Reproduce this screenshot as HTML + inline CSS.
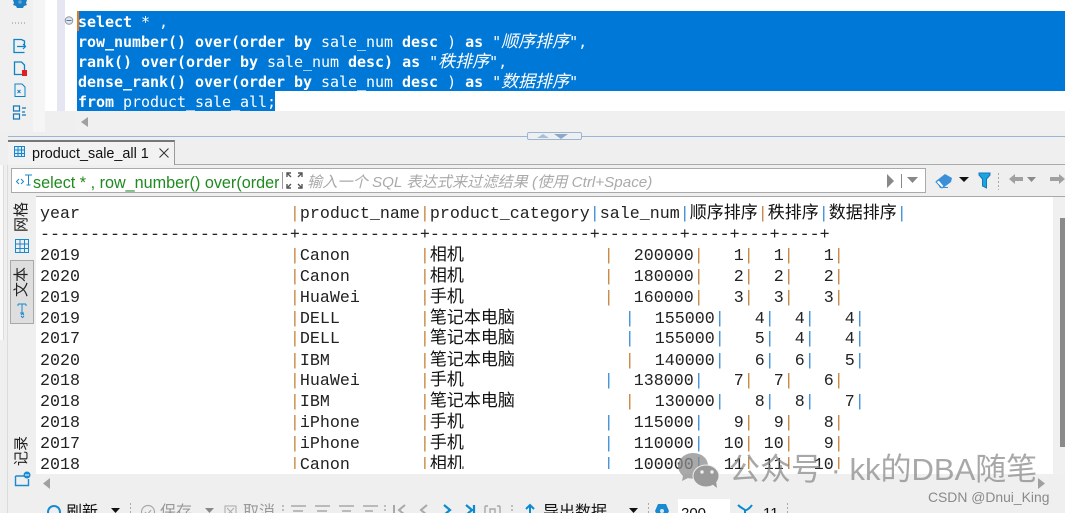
<!DOCTYPE html>
<html><head><meta charset="utf-8">
<style>
html,body{margin:0;padding:0;width:1065px;height:513px;overflow:hidden}
body{background:#efefef;font-family:"Liberation Sans","Noto Sans CJK SC",sans-serif}
#w{position:absolute;left:0;top:0;width:1065px;height:513px;overflow:hidden;background:#efefef}
.a{position:absolute}
.ed{position:absolute;left:78px;height:20px;font:15px/20px "DejaVu Sans Mono",monospace;letter-spacing:-.03px;color:#fff;white-space:pre}
.ed b{font-weight:bold}
.ed i{font-style:italic}
.ed i span{font:italic 17px/0 "Noto Sans CJK SC",sans-serif;letter-spacing:0}
#res{position:absolute;left:36px;top:197px;width:1017px;height:277px;background:#fff;overflow:hidden}
#clip{position:absolute;left:0;top:0;width:1017px;height:272px;overflow:hidden}
.r{position:absolute;left:4px;height:21px;margin-top:1px;font:16.67px/21px "Liberation Mono",monospace;color:#222;white-space:pre}
.r u{text-decoration:none;color:#c8853c}
.r s{text-decoration:none;color:#3d8fd6}
.r em{font:17px/0 "Noto Sans CJK SC",sans-serif;color:#111}
.v{position:absolute;font-size:15px;color:#222;transform:rotate(-90deg);transform-origin:center;white-space:nowrap;line-height:18px;width:36px;height:18px;text-align:center}
.tb{position:absolute;top:504px;font-size:16px;line-height:18px;white-space:nowrap;color:#111}
.gy{color:#999}
</style></head><body>
<div id="w">

<!-- editor -->
<div class="a" style="left:0;top:0;width:33px;height:132px;background:#f0f0f0"></div>
<div class="a" style="left:33px;top:0;width:12px;height:132px;background:#f5f5f5"></div>
<div class="a" style="left:45px;top:0;width:1020px;height:111px;background:#fff"></div>
<div class="a" style="left:57px;top:0;width:8px;height:111px;background:#e6e6f2"></div>
<div class="a" style="left:75px;top:111px;width:990px;height:21px;background:#f0f0f0"></div>
<div class="a" style="left:77px;top:11px;width:988px;height:80px;background:#0078d7"></div>
<div class="a" style="left:77px;top:91px;width:198px;height:20px;background:#0078d7"></div>
<div class="a" style="left:77px;top:11px;width:2px;height:20px;background:#e8781e"></div>
<div class="ed" style="top:12px"><b>select</b> * ,</div>
<div class="ed" style="top:32px"><b>row_number() over(order by</b> sale_num <b>desc</b> ) <b>as</b> <i>"<span>顺序排序</span>"</i>,</div>
<div class="ed" style="top:52px"><b>rank() over(order by</b> sale_num <b>desc)</b> <b>as</b> <i>"<span>秩排序</span>"</i>,</div>
<div class="ed" style="top:72px"><b>dense_rank() over(order by</b> sale_num <b>desc</b> ) <b>as</b> <i>"<span>数据排序</span>"</i></div>
<div class="ed" style="top:92px"><b>from</b> product_sale_all;</div>

<!-- left toolbar icons -->
<svg class="a" style="left:0;top:0" width="80" height="125" fill="none">
<path d="M13 0h14l-1 3 1 2-3 1-1 2h-6l-1-2-3-1 1-2z" fill="#1c7fc4"/><circle cx="20" cy="2" r="1.800" fill="#5aa6dc"/>
<path d="M12 23h1M15 23h1M18 23h1M21 23h1M24 23h1" stroke="#888"/>
<path d="M24.500 47V41l-3-1.500h-7.500v13h10.500" stroke="#0a84c8" stroke-width="1.300"/><path d="M17 46.500h8M23 44l2.500 2.500L23 49" stroke="#0a84c8" stroke-width="1.200"/>
<path d="M14.500 62h7l3 3v9.500h-10z" stroke="#0a84c8" stroke-width="1.300"/><rect x="22" y="70" width="5" height="6" fill="#e02020"/>
<path d="M15 84h7l3 3v9.500H15z" stroke="#0a84c8"/><path d="M17.500 90l3 3M20.500 90l-3 3" stroke="#0a84c8"/>
<path d="M13.500 106h6v5h-6zM13.500 114h6v5h-6zM22 108h4M22 115h4M22 112h3" stroke="#1477b8" stroke-width="1.200"/>
<circle cx="69" cy="20.500" r="3.800" fill="#dfe3ea" stroke="#8a97a8"/><path d="M66.500 20.500h5" stroke="#68768a"/>
</svg>
<svg class="a" style="left:80px;top:114px" width="12" height="16"><path d="M8 3v10L1 8z" fill="#a0a0a0"/></svg>

<!-- splitter -->
<div class="a" style="left:8px;top:136px;width:1057px;height:1px;background:#9ab6d6"></div>
<div class="a" style="left:527px;top:132px;width:53px;height:6px;background:#efefef;border:1px solid #9ab6d6;border-radius:2px"></div>
<svg class="a" style="left:535px;top:133px" width="40" height="6"><path d="M2 5l6-4 6 4z" fill="#a9bfd8"/><path d="M19 1h14l-7 5z" fill="#8ea7c6"/></svg>

<!-- tab -->
<div class="a" style="left:175px;top:164px;width:890px;height:1px;background:#aaa"></div>
<div class="a" style="left:8px;top:140px;width:167px;height:25px;background:#f2f2f2;border-top:2px solid #777;border-right:1px solid #999;box-sizing:border-box"></div>
<svg class="a" style="left:14px;top:146px" width="12" height="12" fill="none" stroke="#1a86c8"><rect x=".5" y=".5" width="10" height="10" fill="#d8ecf8"/><path d="M.5 4h10M.5 7.500h10M4 .5v10M7.500 .5v10"/></svg>
<div class="a" style="left:32px;top:145px;font-size:14.400px;line-height:18px;color:#111;white-space:nowrap">product_sale_all 1</div>
<svg class="a" style="left:158px;top:147px" width="12" height="12" stroke="#333" stroke-width="1"><path d="M1.500 1.500l9 9M10.500 1.500l-9 9"/></svg>

<!-- filter bar -->
<div class="a" style="left:11px;top:168px;width:915px;height:25px;background:#fff;border:1px solid #aaa;box-sizing:border-box"></div>
<svg class="a" style="left:15px;top:172px" width="18" height="16" fill="none" stroke="#1a86c8"><path d="M4 7L1.500 9.500 4 12M6 7l2.500 2.500L6 12" stroke-width="1"/><path d="M10 3h7M13.500 3v10M11.500 13h4" stroke-width="1"/></svg>
<div class="a" style="left:33px;top:174px;width:246px;overflow:hidden;font-size:16.200px;line-height:18px;color:#1f8a1f;white-space:nowrap">select * , row_number() over(order by sale_num desc</div>
<div class="a" style="left:282px;top:172px;width:1px;height:17px;background:#999"></div>
<svg class="a" style="left:286px;top:172px" width="17" height="17" fill="none" stroke="#555" stroke-width="1.400"><path d="M1 5V1h4M1 1l4 4M16 5V1h-4M16 1l-4 4M1 12v4h4M1 16l4-4M16 12v4h-4M16 16l-4-4"/></svg>
<div class="a" style="left:307px;top:174px;font-size:15.200px;line-height:18px;font-style:italic;color:#aaa;white-space:nowrap">输入一个 SQL 表达式来过滤结果 (使用 Ctrl+Space)</div>
<svg class="a" style="left:880px;top:172px" width="46" height="18"><path d="M7 2v14l7-7z" fill="#888"/><path d="M21.500 2v14" stroke="#888"/><path d="M27 5h11l-5.500 6z" fill="#888"/></svg>
<svg class="a" style="left:934px;top:170px" width="131" height="20">
<path d="M2 11l9-7 7 4-1 4-8 6H6z" fill="#3b8fd8"/><path d="M2 12l6 6 2-2-5-6z" fill="#fff" stroke="#3b8fd8"/><path d="M9 17.500h5" stroke="#3b8fd8"/>
<path d="M25 7h10l-5 5z" fill="#111"/>
<path d="M45 3h11v2l-3.500 4v9l-4-2V9L45 5z" fill="#19a6e0" stroke="#1477b8"/>
<path d="M64.500 3v18" stroke="#aaa" stroke-dasharray="2 2"/>
<path d="M75 9l6-5v3h8v4h-8v3z" fill="#a0a0a0"/><path d="M93 7h9l-4.500 5z" fill="#8a8a8a"/><path d="M131 9l-6-5v3h-9v4h9v3z" fill="#a0a0a0"/>
</svg>

<div class="a" style="left:36px;top:196px;width:1029px;height:1px;background:#a8a8a8"></div>

<!-- left side tabs -->
<div class="a" style="left:0;top:165px;width:3px;height:175px;background:#fafafa;border-right:1px solid #ddd"></div>
<div class="a" style="left:7px;top:165px;width:1px;height:348px;background:#dcdcdc"></div>
<div class="v" style="left:4px;top:208px">网格</div>
<svg class="a" style="left:15px;top:239px" width="14" height="14" fill="none" stroke="#1a8ad0"><rect x=".5" y=".5" width="13" height="13"/><path d="M.5 5h13M.5 9.500h13M5 .5v13M9.500 .5v13"/></svg>
<div class="a" style="left:10px;top:260px;width:24px;height:64px;background:#dedede;border:1px solid #a8a8a8;box-sizing:border-box"></div>
<div class="v" style="left:4px;top:273px">文本</div>
<svg class="a" style="left:15px;top:303px" width="14" height="16" fill="none" stroke="#1a8ad0"><path d="M3 1h8M7 1v9M5 10h4M3 1v2M11 1v2" stroke-width="1"/><path d="M6 12l1.500-1.500L9 12M6 13l1.500 1.500L9 13" stroke-width="1"/></svg>
<div class="v" style="left:4px;top:442px">记录</div>
<svg class="a" style="left:14px;top:471px" width="18" height="16" fill="none"><path d="M1.500 5h11M1.500 5v9.500h13V8" stroke="#1a8ad0" stroke-width="1.400"/><circle cx="13" cy="4" r="3.500" fill="#1a8ad0"/><path d="M11 4h4" stroke="#fff"/></svg>

<!-- result -->
<div id="res"><div id="clip">
<div class="r" style="top:6px">year                     <u>|</u>product_name<u>|</u>product_category<s>|</s>sale_num<s>|</s><em>顺序排序</em><u>|</u><em>秩排序</em><s>|</s><em>数据排序</em><s>|</s></div>
<div class="r" style="top:27px">-------------------------+------------+----------------+--------+----+---+----+</div>
<div class="r" style="top:48px">2019                     <u>|</u>Canon       <u>|</u><em>相机</em>              <u>|</u>  200000<u>|</u>   1<u>|</u>  1<u>|</u>   1<u>|</u></div>
<div class="r" style="top:69px">2020                     <u>|</u>Canon       <u>|</u><em>相机</em>              <u>|</u>  180000<u>|</u>   2<u>|</u>  2<u>|</u>   2<u>|</u></div>
<div class="r" style="top:90px">2019                     <u>|</u>HuaWei      <u>|</u><em>手机</em>              <u>|</u>  160000<u>|</u>   3<u>|</u>  3<u>|</u>   3<u>|</u></div>
<div class="r" style="top:111px">2019                     <u>|</u>DELL        <u>|</u><em>笔记本电脑</em>           <s>|</s>  155000<s>|</s>   4<s>|</s>  4<s>|</s>   4<s>|</s></div>
<div class="r" style="top:131px">2017                     <u>|</u>DELL        <u>|</u><em>笔记本电脑</em>           <s>|</s>  155000<s>|</s>   5<s>|</s>  4<s>|</s>   4<s>|</s></div>
<div class="r" style="top:153px">2020                     <u>|</u>IBM         <u>|</u><em>笔记本电脑</em>           <u>|</u>  140000<s>|</s>   6<s>|</s>  6<s>|</s>   5<s>|</s></div>
<div class="r" style="top:173px">2018                     <u>|</u>HuaWei      <u>|</u><em>手机</em>              <s>|</s>  138000<s>|</s>   7<u>|</u>  7<u>|</u>   6<u>|</u></div>
<div class="r" style="top:194px">2018                     <u>|</u>IBM         <u>|</u><em>笔记本电脑</em>           <u>|</u>  130000<s>|</s>   8<s>|</s>  8<s>|</s>   7<s>|</s></div>
<div class="r" style="top:215px">2018                     <u>|</u>iPhone      <u>|</u><em>手机</em>              <s>|</s>  115000<s>|</s>   9<u>|</u>  9<u>|</u>   8<u>|</u></div>
<div class="r" style="top:236px">2017                     <u>|</u>iPhone      <u>|</u><em>手机</em>              <s>|</s>  110000<s>|</s>  10<u>|</u> 10<u>|</u>   9<u>|</u></div>
<div class="r" style="top:257px">2018                     <u>|</u>Canon       <u>|</u><em>相机</em>              <s>|</s>  100000<s>|</s>  11<u>|</u> 11<u>|</u>  10<u>|</u></div>
</div></div>

<!-- scrollbars -->
<div class="a" style="left:1053px;top:197px;width:12px;height:277px;background:#f0f0f0"></div>
<div class="a" style="left:1060px;top:218px;width:5px;height:229px;background:#8a8a8a"></div>
<svg class="a" style="left:41px;top:475px" width="12" height="16"><path d="M9 3v11L2 8.500z" fill="#a0a0a0"/></svg>
<svg class="a" style="left:1036px;top:475px" width="12" height="16"><path d="M2 3v11l7-5.500z" fill="#a0a0a0"/></svg>

<!-- bottom toolbar -->
<svg class="a" style="left:46px;top:503px" width="16" height="10" fill="none" stroke="#1a8ad0" stroke-width="2"><circle cx="8" cy="9" r="6"/></svg>
<div class="tb" style="left:66px">刷新</div>
<svg class="a" style="left:110px;top:507px" width="12" height="6"><path d="M1 1h9l-4.500 5z" fill="#111"/></svg>
<svg class="a" style="left:129px;top:503px" width="3" height="10"><path d="M1.500 0v10" stroke="#aaa" stroke-dasharray="2 2"/></svg>
<svg class="a" style="left:140px;top:504px" width="16" height="9" fill="none" stroke="#aaa" stroke-width="1.200"><circle cx="8" cy="8" r="6.500"/><path d="M5 8l2.500 2.500L11 6"/></svg>
<div class="tb gy" style="left:160px">保存</div>
<svg class="a" style="left:204px;top:507px" width="12" height="6"><path d="M1 1h9l-4.500 5z" fill="#888"/></svg>
<svg class="a" style="left:224px;top:505px" width="13" height="8" fill="none" stroke="#aaa"><rect x="1" y="1" width="11" height="11"/><path d="M3 3l7 7M10 3l-7 7"/></svg>
<div class="tb gy" style="left:243px">取消</div>
<svg class="a" style="left:282px;top:503px" width="300" height="10" fill="none" stroke="#a8a8a8" stroke-width="1.400">
<path d="M1 2v10" stroke-dasharray="2 2"/>
<path d="M9 3h15M11 8h10M33 3h15M35 8h10M57 3h15M60 8h9M81 3h15M83 8h8"/>
<path d="M103 2v10" stroke-dasharray="2 2"/>
<path d="M112 2v10M123 2l-6 5 6 5M145 2l-6 5 6 5" stroke-width="2"/>
<path d="M162 2l6 5-6 5M184 2l6 5-6 5M192 2v10" stroke="#0a8ad0" stroke-width="2.200"/>
<path d="M203 3h3M215 3h3M203 3v8M218 3v8M208 6h5v6h-5z"/>
<path d="M230 2v10" stroke-dasharray="2 2"/>
<path d="M248 12V3M244 6l4-4 4 4" stroke="#0a8ad0" stroke-width="2"/>
</svg>
<div class="tb" style="left:543px">导出数据</div>
<svg class="a" style="left:628px;top:507px" width="12" height="6"><path d="M1 1h9l-4.500 5z" fill="#111"/></svg>
<svg class="a" style="left:647px;top:503px" width="3" height="10"><path d="M1.500 0v10" stroke="#aaa" stroke-dasharray="2 2"/></svg>
<svg class="a" style="left:654px;top:504px" width="16" height="9"><path d="M4 0h8l3 7-3 6H4L1 7z" fill="#1a8ad0"/><circle cx="8" cy="7" r="2" fill="#cfe8f8"/></svg>
<div class="a" style="left:678px;top:499px;width:52px;height:14px;background:#fff"></div>
<div class="tb" style="left:681px;font-size:15px;top:505px;color:#111">200</div>
<svg class="a" style="left:737px;top:503px" width="18" height="10" fill="none" stroke="#0a8ad0" stroke-width="2"><path d="M1 2c3 3 6 4 7 5s5-2 7-5M8 7v5"/></svg>
<div class="tb" style="left:763px;top:505px;font-size:15px">11</div>
<svg class="a" style="left:786px;top:503px" width="3" height="10"><path d="M1.500 0v10" stroke="#aaa" stroke-dasharray="2 2"/></svg>

<!-- watermark -->
<svg class="a" style="left:676px;top:451px" width="50" height="40">
<path d="M17 2C9 2 2 8 2 15c0 4 2 7 5 10l-1 5 6-3c2 .5 3 .7 5 .7 9 0 15-6 15-13S26 2 17 2z" fill="#8c8c8c" opacity=".75"/>
<ellipse cx="30" cy="25" rx="13" ry="11" fill="#9a9a9a" stroke="#efefef" stroke-width="1"/>
<path d="M36 33l5 4-1-7z" fill="#9a9a9a"/>
<circle cx="26" cy="21" r="1.700" fill="#efefef"/><circle cx="36" cy="21" r="1.700" fill="#efefef"/>
</svg>
<div class="a" style="left:729px;top:452px;font-size:31px;line-height:36px;color:rgba(135,135,135,.72);white-space:nowrap">公众号 · kk的DBA随笔</div>
<div class="a" style="left:928px;top:488px;font-size:13.900px;line-height:18px;color:#8a8a8a;white-space:nowrap">CSDN @Dnui_King</div>

</div>
</body></html>
